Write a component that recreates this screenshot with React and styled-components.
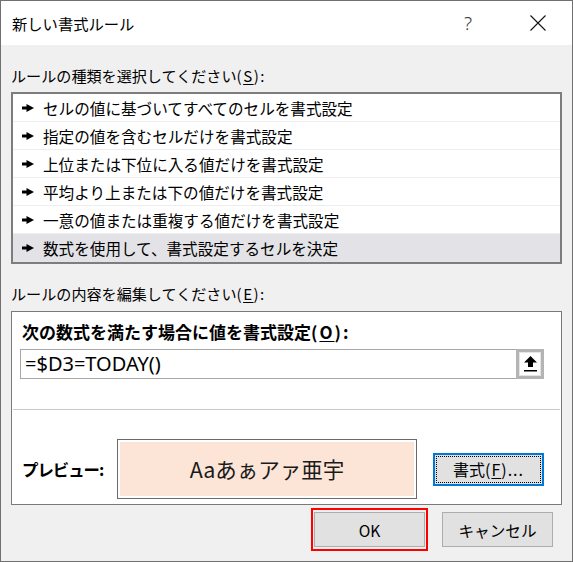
import React from "react";
import styled, { createGlobalStyle } from "styled-components";

const GlobalStyle = createGlobalStyle`
  html, body {
    margin: 0;
    padding: 0;
    background: #ffffff;
  }
  body {
    font-family: "Noto Sans CJK JP", "Noto Sans", sans-serif;
    color: #000;
  }
`;

const Window = styled.div`
  width: 573px;
  height: 562px;
  box-sizing: border-box;
  border: 1px solid #707070;
  background: #f0f0f0;
  display: flex;
  flex-direction: column;
`;

const TitleBar = styled.div`
  height: 44px;
  background: #ffffff;
  display: flex;
  align-items: center;
  padding: 0 11px 0 11px;
`;

const Title = styled.div`
  flex: 1;
  font-size: 15.3px;
  line-height: 20px;
`;

const TitleButton = styled.div`
  width: 46px;
  height: 44px;
  display: flex;
  align-items: center;
  justify-content: center;
  margin-left: ${(p) => p.$gap || 0}px;
  font-family: "Noto Sans", sans-serif;
  font-size: 19px;
  font-weight: 300;
  color: #333;
`;

const Body = styled.div`
  flex: 1;
  display: flex;
  flex-direction: column;
  padding: 20px 10px 0;
`;

const SectionLabel = styled.div`
  font-size: 15.1px;
  line-height: 20px;
  height: 20px;
  margin-top: ${(p) => p.$top || 0}px;
  white-space: nowrap;
`;

const Latin = styled.span`
  letter-spacing: ${(p) => p.$spacing || 0}px;
`;

const Key = styled.span`
  text-decoration: underline;
  text-underline-offset: 2px;
`;

const ListBox = styled.div`
  margin-top: 7px;
  border: 2px solid #7d7d7d;
  background: #ffffff;
  display: flex;
  flex-direction: column;
`;

const ListRow = styled.div`
  height: 28px;
  box-sizing: border-box;
  display: flex;
  align-items: center;
  gap: 9px;
  padding-left: 9px;
  font-size: 15.6px;
  white-space: nowrap;
  background: ${(p) => (p.$selected ? "#e2e2e7" : "#ffffff")};
  border-bottom: 1px solid ${(p) => (p.$selected ? "#e2e2e7" : "#eeeeee")};
`;

const Panel = styled.div`
  margin-top: 8px;
  background: #ffffff;
  border: 1px solid #7a7a7a;
  padding: 10px 0 5px;
  display: flex;
  flex-direction: column;
`;

const FieldLabel = styled.div`
  margin-left: 10px;
  font-size: 17px;
  font-weight: 700;
  line-height: 20px;
  height: 20px;
  white-space: nowrap;
`;

const FormulaField = styled.div`
  margin: 7px 17px 0 8px;
  height: 30px;
  box-sizing: border-box;
  border: 1px solid #a7a7a7;
  display: flex;
  align-items: stretch;
`;

const FormulaText = styled.div`
  flex: 1;
  padding-left: 4px;
  font-family: "Noto Sans", sans-serif;
  font-size: 20px;
  line-height: 28px;
`;

const RefButton = styled.div`
  width: 28px;
  margin: -1px -1px -1px 0;
  box-sizing: border-box;
  border: 3px solid #b4b4b4;
  box-shadow: inset 0 0 0 1px #e4e4e4;
  background: #ffffff;
  display: flex;
  align-items: center;
  justify-content: center;
`;

const Divider = styled.div`
  margin: 30px 1px 0;
  height: 1px;
  background: #c9c9c9;
`;

const PreviewRow = styled.div`
  margin-top: 29px;
  padding-left: 10px;
  display: flex;
  align-items: center;
`;

const PreviewLabel = styled.div`
  width: 95px;
  font-size: 16.4px;
  font-weight: 700;
  line-height: 20px;
  letter-spacing: -1px;
  white-space: nowrap;
`;

const PreviewBox = styled.div`
  width: 300px;
  height: 60px;
  box-sizing: border-box;
  border: 1px solid #6a6a6a;
  box-shadow: inset 0 0 0 2px #ffffff;
  background: #fce4d6;
  display: flex;
  align-items: center;
  justify-content: center;
  font-size: 21.5px;
  color: #1a1a1a;
  padding-bottom: 2px;
`;

const FormatButton = styled.div`
  position: relative;
  margin-left: 16px;
  width: 111px;
  height: 33px;
  box-sizing: border-box;
  border: 2px solid #0078d7;
  background: #e1e1e1;
  display: flex;
  align-items: center;
  justify-content: center;
  font-size: 16px;

  &::after {
    content: "";
    position: absolute;
    inset: 1px;
    border: 1px dotted #000;
  }
`;

const ButtonRow = styled.div`
  margin-top: 3px;
  padding-right: 9px;
  display: flex;
  justify-content: flex-end;
  align-items: center;
  gap: 14px;
`;

const FocusRing = styled.div`
  border: 2px solid #ff0000;
  padding: 2px 1px;
  display: flex;
`;

const DialogButton = styled.div`
  width: 111px;
  height: 35px;
  box-sizing: border-box;
  border: 1px solid #adadad;
  background: #e1e1e1;
  display: flex;
  align-items: center;
  justify-content: center;
  font-size: 15.6px;
`;

const Pointer = () => (
  <svg width="12" height="8" viewBox="0 0 12 8">
    <path d="M0 2.5H4.5V0L12 4L4.5 8V5.5H0Z" fill="#000" />
  </svg>
);

const CloseIcon = () => (
  <svg width="16" height="16" viewBox="0 0 16 16">
    <path d="M0.5 0.5L15.5 15.5M15.5 0.5L0.5 15.5" stroke="#111" strokeWidth="1.1" fill="none" />
  </svg>
);

const UploadIcon = () => (
  <svg width="13" height="16" viewBox="0 0 13 16">
    <path d="M6.5 0L13 6.5H9V11H4V6.5H0Z" fill="#000" />
    <rect x="0" y="14" width="13" height="1.5" fill="#000" />
  </svg>
);

const rules = [
  "セルの値に基づいてすべてのセルを書式設定",
  "指定の値を含むセルだけを書式設定",
  "上位または下位に入る値だけを書式設定",
  "平均より上または下の値だけを書式設定",
  "一意の値または重複する値だけを書式設定",
  "数式を使用して、書式設定するセルを決定",
];

export default function App() {
  return (
    <>
      <GlobalStyle />
      <Window>
        <TitleBar>
          <Title>新しい書式ルール</Title>
          <TitleButton>?</TitleButton>
          <TitleButton $gap={24}>
            <CloseIcon />
          </TitleButton>
        </TitleBar>
        <Body>
          <SectionLabel>
            ルールの種類を選択してください
            <Latin $spacing={1.5}>
              (<Key>S</Key>):
            </Latin>
          </SectionLabel>
          <ListBox>
            {rules.map((r, i) => (
              <ListRow key={r} $selected={i === rules.length - 1}>
                <Pointer />
                {r}
              </ListRow>
            ))}
          </ListBox>
          <SectionLabel $top={19}>
            ルールの内容を編集してください
            <Latin $spacing={1.5}>
              (<Key>E</Key>):
            </Latin>
          </SectionLabel>
          <Panel>
            <FieldLabel>
              次の数式を満たす場合に値を書式設定
              <Latin $spacing={2}>
                (<Key>O</Key>):
              </Latin>
            </FieldLabel>
            <FormulaField>
              <FormulaText>=$D3=TODAY()</FormulaText>
              <RefButton>
                <UploadIcon />
              </RefButton>
            </FormulaField>
            <Divider />
            <PreviewRow>
              <PreviewLabel>プレビュー:</PreviewLabel>
              <PreviewBox>Aaあぁアァ亜宇</PreviewBox>
              <FormatButton>
                書式
                <Latin $spacing={1}>
                  (<Key>F</Key>)...
                </Latin>
              </FormatButton>
            </PreviewRow>
          </Panel>
          <ButtonRow>
            <FocusRing>
              <DialogButton>OK</DialogButton>
            </FocusRing>
            <DialogButton>キャンセル</DialogButton>
          </ButtonRow>
        </Body>
      </Window>
    </>
  );
}
